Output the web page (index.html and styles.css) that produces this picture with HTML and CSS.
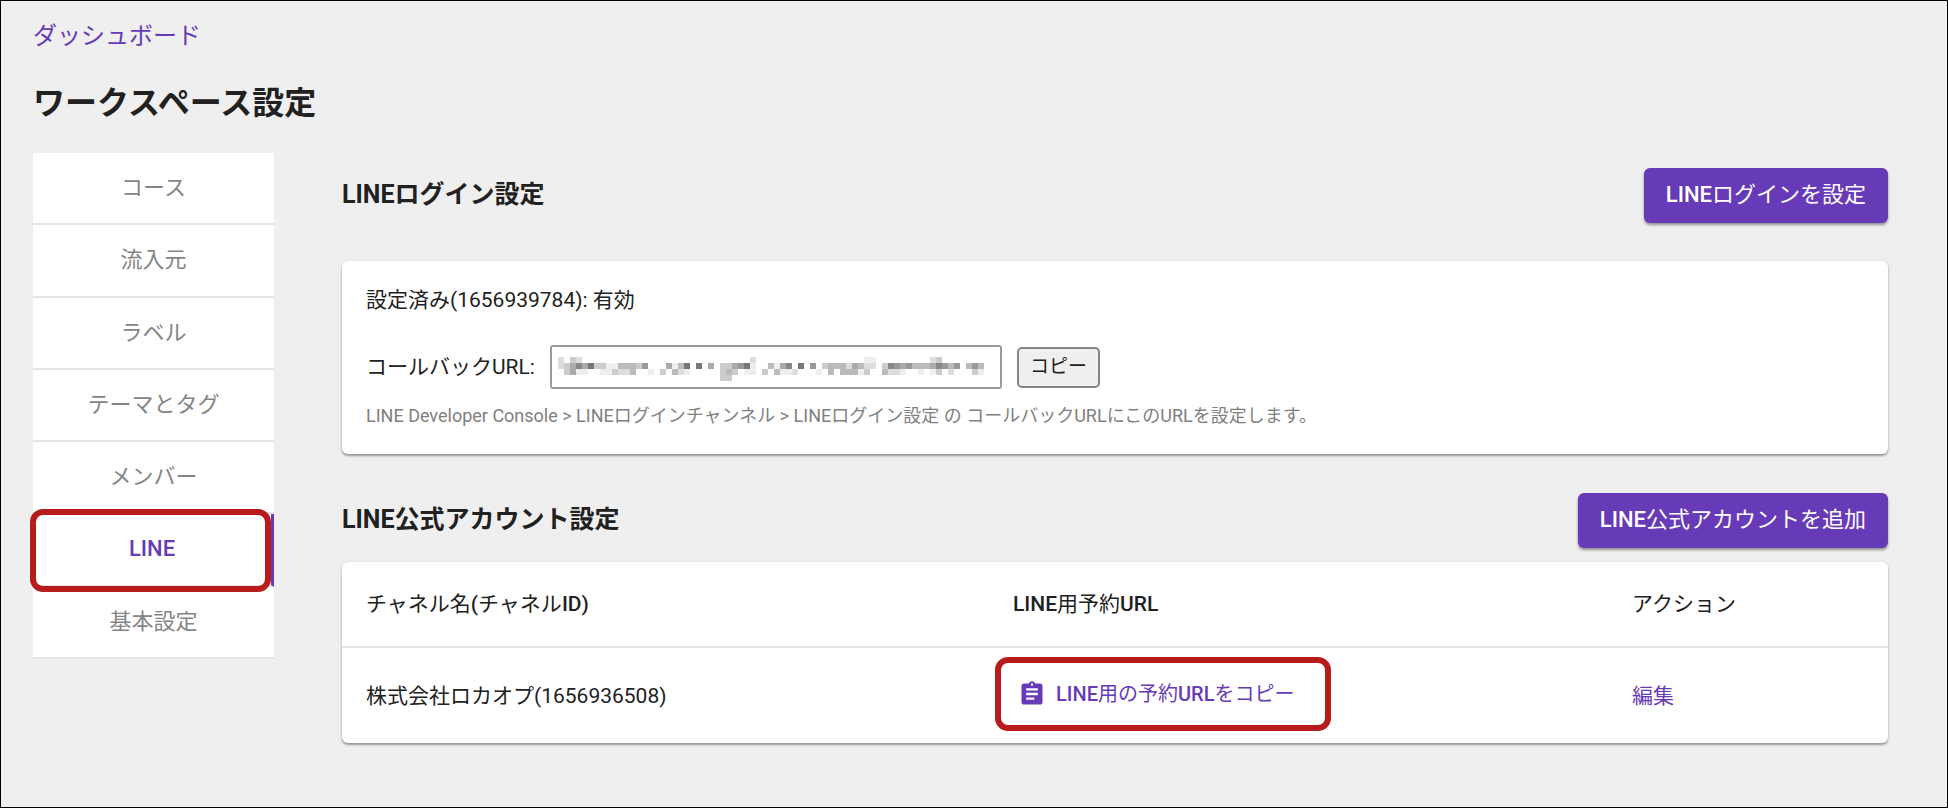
FILE: index.html
```
<!DOCTYPE html>
<html lang="ja">
<head>
    <meta charset="UTF-8">
    <meta name="viewport" content="width=device-width, initial-scale=1.0">
    <title>ワークスペース設定</title>
    <link rel="stylesheet" href="styles.css">
</head>
<body>
    <div class="page">
        <a href="#" class="breadcrumb">ダッシュボード</a>
        <h1>ワークスペース設定</h1>
        <div class="layout">
            <nav class="side-tabs">
                <a href="#">コース</a>
                <a href="#">流入元</a>
                <a href="#">ラベル</a>
                <a href="#">テーマとタグ</a>
                <a href="#">メンバー</a>
                <a href="#" class="active"><b>LINE</b></a>
                <a href="#">基本設定</a>
            </nav>
            <main>
                <div class="section-header">
                    <h2>LINEログイン設定</h2>
                    <button type="button" class="btn"><b>LINE</b>ログインを設定</button>
                </div>
                <div class="card login-card">
                    <p>設定済み(1656939784): 有効</p>
                    <div class="callback-row">
                        <label for="callback_url">コールバックURL:</label>
                        <div class="masked-field">
                            <input type="text" id="callback_url" readonly>
                            <svg id="mosaic" width="426" height="24" aria-hidden="true"></svg>
                        </div>
                        <button type="button" class="copy-btn">コピー</button>
                    </div>
                    <p class="caption">LINE Developer Console &gt; LINEログインチャンネル &gt; LINEログイン設定 の コールバックURLにこのURLを設定します。</p>
                </div>
                <div class="section-header account-header">
                    <h2>LINE公式アカウント設定</h2>
                    <button type="button" class="btn"><b>LINE</b>公式アカウントを追加</button>
                </div>
                <table class="card">
                    <thead>
                        <tr>
                            <th>チャネル名<b>(</b>チャネル<b>ID)</b></th>
                            <th class="col-url"><b>LINE</b>用予約<b>URL</b></th>
                            <th class="col-action">アクション</th>
                        </tr>
                    </thead>
                    <tbody>
                        <tr>
                            <td>株式会社ロカオプ(1656936508)</td>
                            <td>
                                <button type="button" class="text-btn">
                                    <svg viewBox="0 0 24 24" width="28" height="28" aria-hidden="true"><path fill="currentColor" d="M19 3h-4.180C14.400 1.840 13.300 1 12 1c-1.300 0-2.400.840-2.820 2H5c-1.100 0-2 .900-2 2v14c0 1.100.900 2 2 2h14c1.100 0 2-.900 2-2V5c0-1.100-.900-2-2-2zm-7 0c.550 0 1 .450 1 1s-.450 1-1 1-1-.450-1-1 .450-1 1-1zm2 14H7v-2h7v2zm3-4H7v-2h10v2zm0-4H7V7h10v2z"/></svg>
                                    <span><b>LINE</b>用の予約<b>URL</b>をコピー</span>
                                </button>
                            </td>
                            <td><a href="#">編集</a></td>
                        </tr>
                    </tbody>
                </table>
            </main>
        </div>
    </div>
    <script>
        // Mosaic over the callback URL: [row, first column, gray level per cell]
        const mosaicRuns = [
            [0, 0, 'd.cd'], [0, 32, 'd'], [0, 51, 'ee'], [0, 62, 'dc'],
            [1, 0, 'dca8a7cceebbbc9'], [1, 18, 'aeb7.7.a'], [1, 27, 'cca97e'],
            [1, 35, 'bea8.7.9.cbbbdabdd'], [1, 54, 'c89a9bbba89b9.b9b'],
            [2, 1, 'caee..eecddb..e.c.bde'], [2, 27, 'cbc.ee.c.beed...e'],
            [2, 45, 'b.bbbec'], [2, 54, 'bdde..e.ec.d...ce'],
            [3, 27, 'cc']
        ];
        const cellSize = 6;
        const mosaic = document.getElementById('mosaic');

        mosaicRuns.forEach(([row, start, cells]) => {
            [...cells].forEach((level, i) => {
                if (level === '.') return;
                const rect = document.createElementNS('http://www.w3.org/2000/svg', 'rect');
                rect.setAttribute('x', (start + i) * cellSize);
                rect.setAttribute('y', row * cellSize);
                rect.setAttribute('width', cellSize);
                rect.setAttribute('height', cellSize);
                rect.setAttribute('fill', '#' + level.repeat(3));
                mosaic.appendChild(rect);
            });
        });
    </script>
</body>
</html>
```

FILE: styles.css
```
* {
    box-sizing: border-box;
}
body {
    margin: 0;
    min-height: 100vh;
    background: #efefef;
    border: 1px solid #000;
    color: #212121;
    font-family: Roboto, "Noto Sans CJK JP", sans-serif;
    font-size: 21px;
    line-height: 30px;
}
a {
    color: #673ab7;
    text-decoration: none;
}
/* latin parts of labels are heavier than the kana */
b {
    font-weight: 500;
}
h1, h2, p {
    margin: 0;
}
.page {
    padding: 17px 59px 32px 32px;
}
.breadcrumb {
    display: block;
    font-size: 24px;
    line-height: 36px;
}
h1 {
    margin-top: 27px;
    font-size: 32px;
    line-height: 44px;
}
.layout {
    display: grid;
    grid-template-columns: 241px 1fr;
    gap: 68px;
    align-items: start;
    margin-top: 28px;
}
.side-tabs {
    display: flex;
    flex-direction: column;
    height: 506px;
}
.side-tabs a {
    flex: 1;
    padding-top: 20px;
    background: #fff;
    border-bottom: 2px solid #e5e5e5;
    color: #858585;
    font-size: 22px;
    text-align: center;
}
.side-tabs .active {
    position: relative;
    border-right: 3px solid #673ab7;
    color: #673ab7;
}
/* red highlight frames */
.side-tabs .active::after,
.text-btn::after {
    content: "";
    position: absolute;
    border: 6px solid #b71c1c;
    border-radius: 13px;
}
.side-tabs .active::after {
    inset: -5px 0 -7px -3px;
}
.section-header {
    display: flex;
    justify-content: space-between;
    align-items: center;
    padding-top: 15px;
}
h2 {
    font-size: 25px;
    line-height: 36px;
    padding-bottom: 2px;
}
.btn {
    height: 55px;
    padding: 0 22px 2px;
    border: none;
    border-radius: 6px;
    background: #673ab7;
    color: #fff;
    font: inherit;
    font-size: 22px;
    box-shadow: 0 2px 3px rgba(0, 0, 0, 0.4);
}
.card {
    width: 100%;
    background: #fff;
    border-radius: 6px;
    box-shadow: 0 2px 2px rgba(0, 0, 0, 0.3), 0 1px 4px rgba(0, 0, 0, 0.12);
}
.login-card {
    margin-top: 38px;
    padding: 24px;
}
.callback-row {
    display: flex;
    align-items: center;
    gap: 15px;
    margin-top: 30px;
}
.masked-field {
    position: relative;
}
.masked-field input {
    display: block;
    width: 452px;
    height: 44px;
    border: 2px solid #999;
    border-radius: 3px;
    background: #fff;
}
.masked-field svg {
    position: absolute;
    top: 12px;
    left: 8px;
}
.copy-btn {
    height: 41px;
    padding: 0 11px;
    border: 2px solid #858585;
    border-radius: 5px;
    background: #efefef;
    color: inherit;
    font: inherit;
    font-size: 19px;
}
.caption {
    margin-top: 13px;
    color: #808080;
    font-size: 18px;
    line-height: 28px;
}
.account-header {
    margin-top: 24px;
}
table.card {
    margin-top: 14px;
    border-collapse: collapse;
    table-layout: fixed;
}
th, td {
    padding: 0 24px;
    text-align: left;
}
th {
    height: 85px;
    border-bottom: 2px solid #e5e5e5;
    font-weight: 400;
}
td {
    height: 96px;
}
.col-url {
    width: 619px;
}
.col-action {
    width: 280px;
}
.text-btn {
    position: relative;
    display: flex;
    align-items: center;
    gap: 10px;
    margin-bottom: 4px;
    padding: 0 5px;
    border: none;
    background: none;
    color: #673ab7;
    font: inherit;
    font-size: 20px;
}
.text-btn::after {
    inset: -22px -32px -22px -18px;
}
```
